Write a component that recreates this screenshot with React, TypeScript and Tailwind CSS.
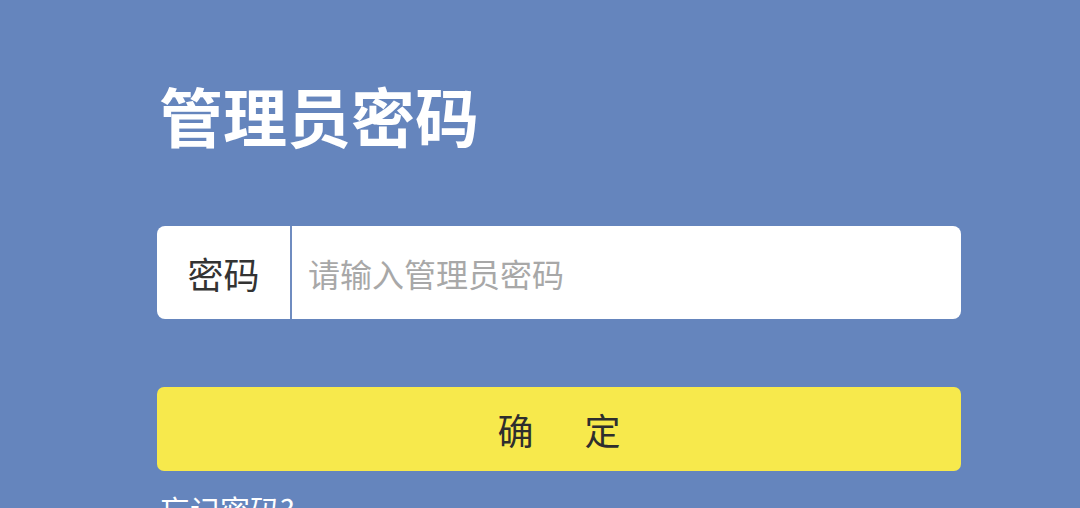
import React from 'react';

const font = { fontFamily: '"Noto Sans CJK SC", "Noto Sans", sans-serif' };

export default function App() {
  return (
    <div className="w-[1080px] h-[508px] overflow-hidden bg-[#6585bd]" style={font}>
      <div className="ml-[157px] w-[804px] pt-[78px]">
        <h1 className="pl-[2px] text-[64px] leading-[72px] font-bold text-white">管理员密码</h1>

        <div className="mt-[76px] flex h-[93px] rounded-[8px] bg-white overflow-hidden">
          <div className="flex w-[133px] items-center justify-center text-[36px] text-[#333333]">密码</div>
          <div className="w-[2px] bg-[#6f8cc0]" />
          <input
            className="flex-1 px-[16px] text-[32px] text-[#333333] outline-none placeholder:text-[#a8a8a8]"
            style={font}
            placeholder="请输入管理员密码"
          />
        </div>

        <button className="mt-[68px] flex h-[84px] w-full items-center justify-center gap-[51px] rounded-[7px] bg-[#f7e94c] text-[36px] text-[#2e2e2e]">
          <span>确</span>
          <span>定</span>
        </button>

        <div className="mt-[18px] pl-[3px] text-[30px] leading-[40px] text-white">忘记密码?</div>
      </div>
    </div>
  );
}
